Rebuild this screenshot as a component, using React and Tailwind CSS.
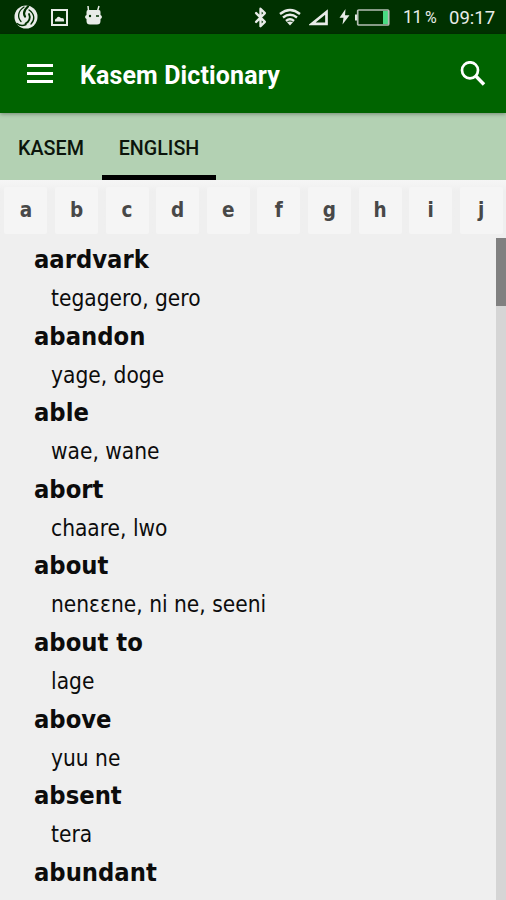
import { Bluetooth } from 'lucide-react';

const letters = ['a', 'b', 'c', 'd', 'e', 'f', 'g', 'h', 'i', 'j'];

const entries = [
    { word: 'aardvark', meaning: 'tegagero, gero' },
    { word: 'abandon', meaning: 'yage, doge' },
    { word: 'able', meaning: 'wae, wane' },
    { word: 'abort', meaning: 'chaare, lwo' },
    { word: 'about', meaning: 'nenɛɛne, ni ne, seeni' },
    { word: 'about to', meaning: 'lage' },
    { word: 'above', meaning: 'yuu ne' },
    { word: 'absent', meaning: 'tera' },
    { word: 'abundant', meaning: '' }
];

function StatusBar() {
    return (
        <div className="flex h-[34px] shrink-0 items-center bg-[#003100] text-[#e8ece8]">
            <svg className="ml-[14px] h-6 w-6" viewBox="0 0 24 24" fill="none" strokeLinecap="round">
                <circle cx="12" cy="12" r="11.500" fill="currentColor" />
                <g stroke="#003100">
                    <path d="M10 2C4 6 3 12 7 16.500" strokeWidth="1.300" />
                    <path d="M14 1.500C10 5 9.500 9 11 11.500" strokeWidth="2.200" />
                    <path d="M15 5C21 9 21 15 17 19" strokeWidth="1.300" />
                    <path d="M15 9C17 13 15 17 11.500 18.500" strokeWidth="1.800" />
                    <path d="M3 18.500C6 21 10 20.500 12 19.500" strokeWidth="1.500" />
                </g>
            </svg>
            <svg className="ml-[13px] h-[17px] w-[17px]" viewBox="0 0 17 17">
                <rect x="1" y="1" width="15" height="15" fill="none" stroke="currentColor" strokeWidth="2" />
                <path d="M4 12.500V11Q4 9.500 5.500 9.500Q6.500 7 8.500 8Q10 9.500 11 9Q13 9 13 11V12.500Z" fill="currentColor" />
            </svg>
            <svg className="ml-[16px] -mt-1 h-[21px] w-[19px]" viewBox="0 0 19 21">
                <path d="M4.500 6L4 1M13.500 6L15 1" stroke="currentColor" strokeWidth="1.500" />
                <path d="M4 5H15Q16.500 5 16.500 7V10L17.800 11V13L16.500 14V16Q16.500 19.500 13 19.500H6Q2.500 19.500 2.500 16V14L1.200 13V11L2.500 10V7Q2.500 5 4 5Z" fill="currentColor" />
                <circle cx="6" cy="11" r="1.200" fill="#003100" />
                <path d="M12 11H15" stroke="#003100" strokeWidth="1.500" />
            </svg>
            <Bluetooth className="ml-[147px] h-[21px] w-[21px]" strokeWidth={2.700} />
            <svg className="ml-[8px] h-[18px] w-[22px]" viewBox="0 0 22 18" fill="none" stroke="currentColor" strokeWidth="2.400">
                <path d="M1 6Q11-2 21 6M4 9.500Q11 4 18 9.500M7 13Q11 9.500 15 13" />
                <path d="M8 14.300Q11 12.500 14 14.300L11 17.500Z" fill="currentColor" stroke="none" />
            </svg>
            <svg className="ml-[8px] h-[17px] w-[20px]" viewBox="0 0 20 17">
                <path d="M3 14.800L17.500 3V14.800Z" fill="none" stroke="currentColor" strokeWidth="2.700" />
            </svg>
            <svg className="ml-[10px] h-[16px] w-[11px]" viewBox="0 0 11 16">
                <path d="M6.500 0L.5 8.800H4.500L3.500 15.500L10.500 6.200H6Z" fill="currentColor" />
            </svg>
            <svg className="ml-[5px] h-[17px] w-[35px]" viewBox="0 0 35 17">
                <rect x="0" y="5.500" width="2" height="6" fill="currentColor" />
                <rect x="28" y="2" width="5" height="13" fill="#48dc82" />
                <rect x="2.700" y="1" width="31" height="15" rx="1" fill="none" stroke="#b4beb4" strokeWidth="1.700" />
            </svg>
            <span className="ml-[13px] w-[36px] pt-0.5 whitespace-nowrap font-[Roboto,sans-serif] text-[17.500px] leading-none tracking-[-0.300px]">
                11<span className="ml-[3px] text-[16px]">%</span>
            </span>
            <span className="ml-[10px] pt-0.5 whitespace-nowrap font-[Roboto,sans-serif] text-[18.500px] leading-none">09:17</span>
        </div>
    );
}

function Header() {
    return (
        <header className="relative z-10 flex h-[79px] shrink-0 items-center bg-[#006400] text-white shadow-[0_1px_4px_rgba(0,0,0,0.35)]">
            <button className="ml-[27px] flex w-[26px] flex-col gap-[5px]" aria-label="Menu">
                <span className="h-[3px] w-full bg-white" />
                <span className="h-[3px] w-full bg-white" />
                <span className="h-[3px] w-full bg-white" />
            </button>
            <h1 className="ml-[27px] pt-[3px] font-[Roboto,sans-serif] text-[25px] font-bold leading-none tracking-[0.120px]">Kasem Dictionary</h1>
            <svg className="mr-[20px] ml-auto h-[26px] w-[26px]" viewBox="0 0 26 26" fill="none" stroke="currentColor">
                <circle cx="10" cy="9.300" r="8" strokeWidth="2.700" />
                <path d="M15.500 14.800L24 23.500" strokeWidth="3.400" />
            </svg>
        </header>
    );
}

function Tabs() {
    return (
        <nav className="flex h-[67px] shrink-0 bg-[#b3d1b3] font-[Roboto,sans-serif] text-[19.700px] font-medium text-[#0c150c]">
            <button className="w-[102px] pt-[5px] text-center">KASEM</button>
            <button className="w-[114px] border-b-[5px] border-black pt-2.5 text-center">ENGLISH</button>
        </nav>
    );
}

export default function App() {
    return (
        <div className="flex h-[900px] w-[506px] flex-col overflow-hidden bg-[#efefef]">
            <StatusBar />
            <Header />
            <Tabs />

            <div className="flex h-[58px] shrink-0 gap-[7.600px] bg-linear-to-b from-[#f6f6f6] to-[#efefef] to-20% pt-[7px] pl-[4.400px]">
                {letters.map((letter) => (
                    <button
                        key={letter}
                        className="h-[47px] w-[43px] shrink-0 rounded-xs bg-[#f5f5f5] pb-px font-['DejaVu_Sans_Condensed','DejaVu_Sans',sans-serif] text-[20.500px] font-bold font-stretch-condensed text-[#484848]"
                    >
                        {letter}
                    </button>
                ))}
            </div>

            <div className="flex min-h-0 flex-1 justify-between">
                <dl className="overflow-hidden pl-[34px] font-['DejaVu_Sans_Condensed','DejaVu_Sans',sans-serif] font-stretch-condensed text-[#0c0c0c]">
                    {entries.map(({ word, meaning }) => (
                        <div key={word} className="h-[76.600px] whitespace-nowrap">
                            <dt className="h-[39px] text-[25.300px] leading-[44px] font-bold">{word}</dt>
                            <dd className="ml-[17px] text-[22.500px] leading-[42px]">{meaning}</dd>
                        </div>
                    ))}
                </dl>
                <div className="w-[10px] bg-[#d5d5d5]">
                    <div className="h-[68px] bg-[#808080]" />
                </div>
            </div>
        </div>
    );
}
